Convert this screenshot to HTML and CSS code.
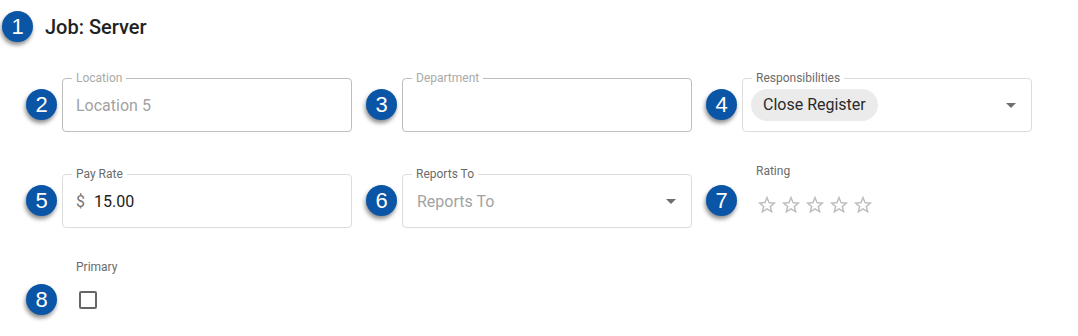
FILE: index.html
```html
<!DOCTYPE html>
<html lang="en">
<head>
  <meta charset="UTF-8">
  <title>Job: Server</title>
  <link rel="stylesheet" href="styles.css">
</head>
<body>
  <div class="page">
    <div class="header">
      <span class="badge">1</span>
      <h2>Job: Server</h2>
    </div>

    <div class="grid">
      <div class="cell">
        <span class="badge">2</span>
        <div class="field">
          <div class="box disabled">
            <span class="label">Location</span>
            <span class="muted">Location 5</span>
          </div>
        </div>
      </div>

      <div class="cell">
        <span class="badge">3</span>
        <div class="field">
          <div class="box disabled">
            <span class="label">Department</span>
          </div>
        </div>
      </div>

      <div class="cell">
        <span class="badge">4</span>
        <div class="field">
          <div class="box select">
            <span class="label">Responsibilities</span>
            <span class="chip">Close Register</span>
            <svg class="arrow" viewBox="0 0 24 24"><path d="M7 10l5 5 5-5z"/></svg>
          </div>
        </div>
      </div>

      <div class="cell">
        <span class="badge">5</span>
        <div class="field">
          <div class="box">
            <span class="label">Pay Rate</span>
            <span class="adorn">$</span>
            <span class="value">15.00</span>
          </div>
        </div>
      </div>

      <div class="cell">
        <span class="badge">6</span>
        <div class="field">
          <div class="box select">
            <span class="label">Reports To</span>
            <span class="muted">Reports To</span>
            <svg class="arrow" viewBox="0 0 24 24"><path d="M7 10l5 5 5-5z"/></svg>
          </div>
        </div>
      </div>

      <div class="cell cell-rating">
        <span class="badge">7</span>
        <div class="field plain">
          <div class="caption">Rating</div>
          <div class="stars">
            <svg viewBox="0 0 24 24"><path d="M22 9.24l-7.19-.62L12 2 9.19 8.63 2 9.24l5.46 4.73L5.82 21 12 17.27 18.18 21l-1.63-7.03L22 9.24zM12 15.4l-3.76 2.27 1-4.28-3.32-2.88 4.38-.38L12 6.1l1.71 4.04 4.38.38-3.32 2.88 1 4.28L12 15.4z"/></svg>
            <svg viewBox="0 0 24 24"><path d="M22 9.24l-7.19-.62L12 2 9.19 8.63 2 9.24l5.46 4.73L5.82 21 12 17.27 18.18 21l-1.63-7.03L22 9.24zM12 15.4l-3.76 2.27 1-4.28-3.32-2.88 4.38-.38L12 6.1l1.71 4.04 4.38.38-3.32 2.88 1 4.28L12 15.4z"/></svg>
            <svg viewBox="0 0 24 24"><path d="M22 9.24l-7.19-.62L12 2 9.19 8.63 2 9.24l5.46 4.73L5.82 21 12 17.27 18.18 21l-1.63-7.03L22 9.24zM12 15.4l-3.76 2.27 1-4.28-3.32-2.88 4.38-.38L12 6.1l1.71 4.04 4.38.38-3.32 2.88 1 4.28L12 15.4z"/></svg>
            <svg viewBox="0 0 24 24"><path d="M22 9.24l-7.19-.62L12 2 9.19 8.63 2 9.24l5.46 4.73L5.82 21 12 17.27 18.18 21l-1.63-7.03L22 9.24zM12 15.4l-3.76 2.27 1-4.28-3.32-2.88 4.38-.38L12 6.1l1.71 4.04 4.38.38-3.32 2.88 1 4.28L12 15.4z"/></svg>
            <svg viewBox="0 0 24 24"><path d="M22 9.24l-7.19-.62L12 2 9.19 8.63 2 9.24l5.46 4.73L5.82 21 12 17.27 18.18 21l-1.63-7.03L22 9.24zM12 15.4l-3.76 2.27 1-4.28-3.32-2.88 4.38-.38L12 6.1l1.71 4.04 4.38.38-3.32 2.88 1 4.28L12 15.4z"/></svg>
          </div>
        </div>
      </div>

      <div class="cell cell-check">
        <span class="badge">8</span>
        <div class="field plain">
          <div class="caption">Primary</div>
          <span class="checkbox"></span>
        </div>
      </div>
    </div>
  </div>
</body>
</html>
```

FILE: styles.css
```css
html, body {
  min-height: 336px;
}
body {
  margin: 0;
  background: #fff;
  font-family: Roboto, "Liberation Sans", sans-serif;
  color: #212121;
}
.page {
  padding-top: 11px;
  padding-bottom: 24px;
}
.header {
  display: flex;
  align-items: center;
  padding-left: 2px;
}
.header h2 {
  margin: 0 0 0 12px;
  font-size: 20px;
  font-weight: 500;
  color: #222;
}
.badge {
  flex: none;
  width: 31px;
  height: 31px;
  border-radius: 50%;
  background: #0a55a6;
  color: #fff;
  font-family: "Liberation Sans", Arial, sans-serif;
  font-size: 22px;
  line-height: 31px;
  text-align: center;
  box-shadow: -1px 3px 4px rgba(0, 0, 0, 0.45);
}
.grid {
  display: grid;
  grid-template-columns: repeat(3, 326px);
  column-gap: 14px;
  row-gap: 31px;
  padding-left: 26px;
  margin-top: 26px;
}
.cell {
  display: flex;
  align-items: flex-end;
  gap: 5px;
}
.cell .badge {
  margin-bottom: 12px;
}
.field {
  width: 290px;
  padding-top: 10px;
}
.field.plain {
  padding-top: 0;
  padding-left: 14px;
  width: 276px;
}
.box {
  position: relative;
  height: 54px;
  box-sizing: border-box;
  border: 1px solid #dcdcdc;
  border-radius: 4px;
  display: flex;
  align-items: center;
  padding: 0 13px;
  font-size: 16px;
}
.box.disabled {
  border-color: #bdbdbd;
}
.box.select {
  padding-left: 8px;
}
.box.select .muted {
  padding-left: 6px;
}
.label {
  position: absolute;
  left: 9px;
  top: -8px;
  padding: 0 4px;
  background: #fff;
  font-size: 12px;
  line-height: 14px;
  color: #6b6b6b;
}
.disabled .label {
  color: #aaa;
}
.muted {
  color: #a3a3a3;
}
.value {
  color: #212121;
}
.adorn {
  color: #757575;
  margin-right: 9px;
}
.chip {
  display: inline-block;
  height: 32px;
  line-height: 32px;
  padding: 0 12px;
  border-radius: 16px;
  background: #ebebeb;
  color: #2a2a2a;
}
.arrow {
  position: absolute;
  right: 8px;
  top: 14px;
  width: 24px;
  height: 24px;
  fill: #6e6e6e;
}
.caption {
  font-size: 12px;
  line-height: 16px;
  color: #6b6b6b;
}
.stars {
  display: flex;
  gap: 2px;
  margin-top: 15px;
  height: 22px;
  margin-bottom: 12px;
}
.stars svg {
  width: 22px;
  height: 22px;
  fill: #bdbdbd;
}
.cell-check .badge {
  margin-bottom: -6px;
}
.checkbox {
  display: block;
  width: 14px;
  height: 14px;
  margin: 16px 0 0 3px;
  border: 2px solid #666;
  border-radius: 2px;
}
```
